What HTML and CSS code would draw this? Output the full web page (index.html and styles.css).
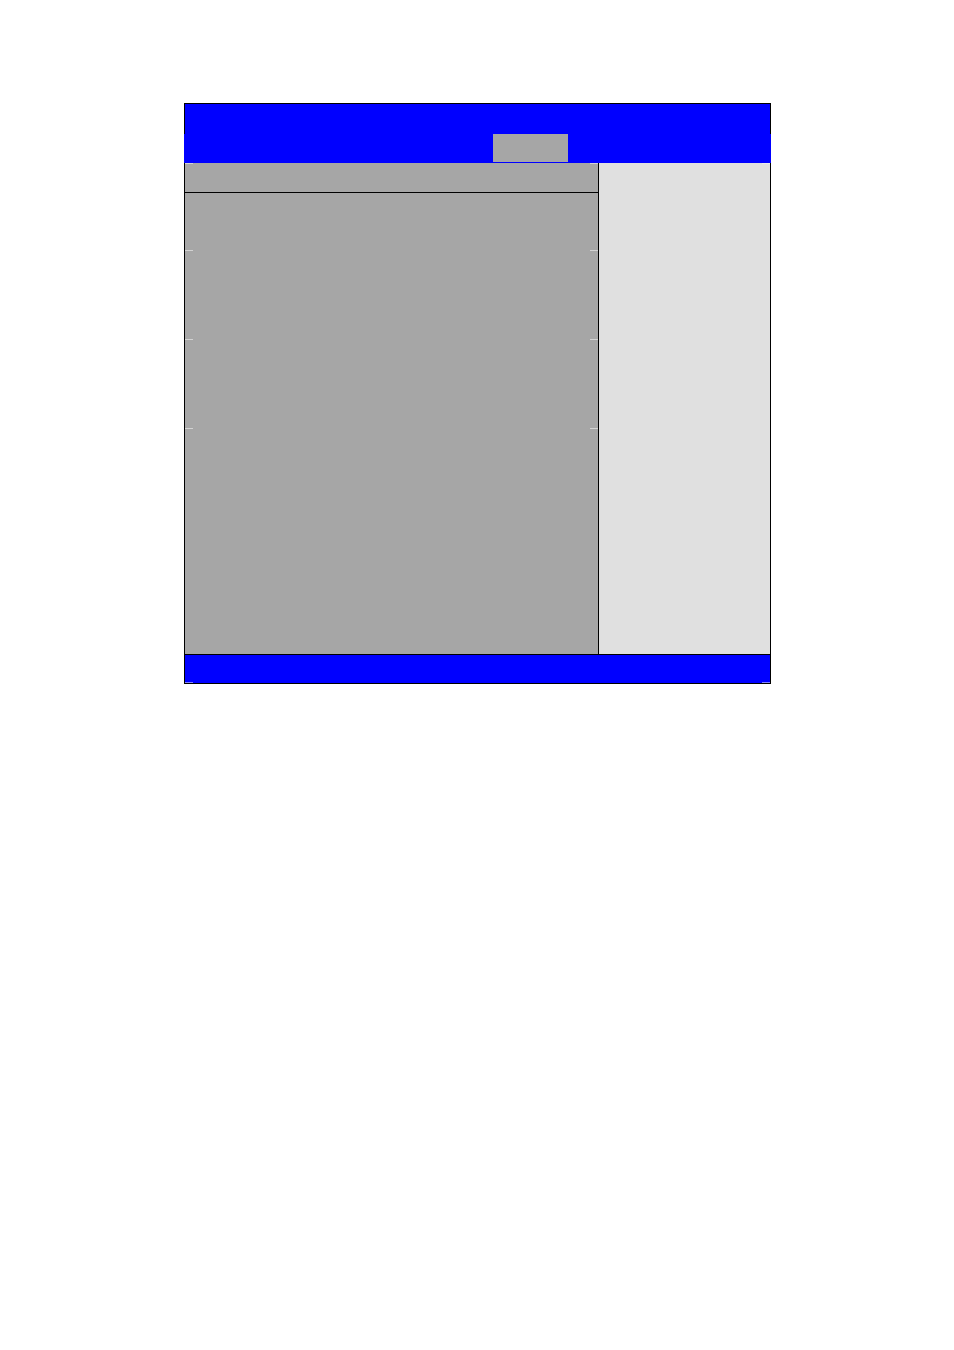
FILE: index.html
```html
<!DOCTYPE html>
<html>
<head>
	<title>Setup Utility</title>
	<link rel="stylesheet" href="styles.css">
</head>
<body>
	<div class="screen">
		<div class="title-bar"></div>
		<div class="menu-bar">
			<div class="menu-tab active"></div>
		</div>
		<div class="main">
			<div class="options">
				<div class="tick-row"><span class="tick"></span><span class="tick"></span></div>
				<div class="section-head"></div>
				<div class="option-list">
					<div class="tick-row first"><span class="tick"></span><span class="tick"></span></div>
					<div class="tick-row"><span class="tick"></span><span class="tick"></span></div>
					<div class="tick-row"><span class="tick"></span><span class="tick"></span></div>
				</div>
			</div>
			<div class="help">
				<div class="tick-row end"><span class="tick"></span></div>
			</div>
		</div>
		<div class="key-bar">
			<div class="tick-row bottom"><span class="tick"></span><span class="tick"></span></div>
		</div>
	</div>
</body>
</html>
```

FILE: styles.css
```css
body {
	font-family: "Liberation Sans", Arial, sans-serif;
	margin: 0;
	padding: 0;
	background-color: #fff;
}
.screen {
	width: 587px;
	margin: 103px 0 0 184px;
	display: flex;
	flex-direction: column;
}
.title-bar {
	height: 30px;
	background-color: #0000ff;
	border: 1px solid #000;
	border-bottom: none;
}
.menu-bar {
	height: 29px;
	background-color: #0000ff;
	display: flex;
	padding-left: 309px;
}
.menu-tab {
	width: 75px;
	height: 28px;
}
.menu-tab.active {
	background-color: #a6a6a6;
}
.main {
	display: flex;
	height: 491px;
	border-left: 1px solid #000;
	border-right: 1px solid #000;
}
.options {
	width: 413px;
	background-color: #a6a6a6;
	border-right: 1px solid #000;
	display: flex;
	flex-direction: column;
}
.section-head {
	height: 28px;
	border-bottom: 1px solid #000;
}
.option-list {
	display: flex;
	flex-direction: column;
}
.help {
	flex: 1;
	background-color: #e0e0e0;
	display: flex;
	flex-direction: column;
}
.tick-row {
	height: 1px;
	display: flex;
	justify-content: space-between;
}
.tick-row.first {
	margin-top: 57px;
}
.tick-row + .tick-row {
	margin-top: 88px;
}
.tick-row.end {
	justify-content: flex-end;
}
.tick {
	width: 8px;
	height: 1px;
	background-color: #d2d2d2;
}
.help .tick {
	background-color: #ececec;
}
.key-bar {
	height: 28px;
	background-color: #0000ff;
	border: 1px solid #000;
	display: flex;
	flex-direction: column;
	justify-content: flex-end;
}
.key-bar .tick {
	background-color: #8080ff;
}
```
